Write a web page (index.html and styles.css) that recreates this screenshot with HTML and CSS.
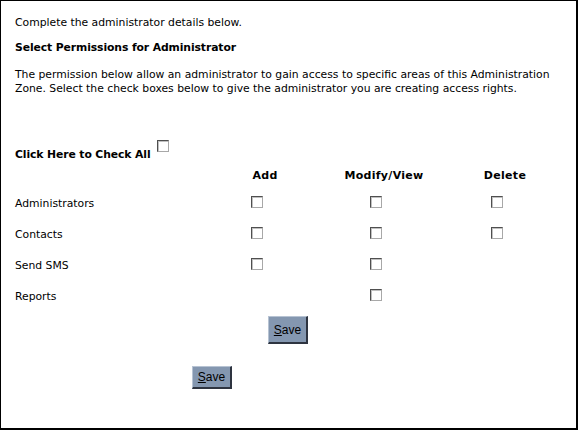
FILE: index.html
```html
<!DOCTYPE html>
<html>
<head>
<meta charset="utf-8">
<link rel="stylesheet" href="styles.css">
</head>
<body>
<div class="frame">
  <p class="intro">Complete the administrator details below.</p>
  <h2 class="title">Select Permissions for Administrator</h2>
  <p class="desc">The permission below allow an administrator to gain access to specific areas of this Administration Zone. Select the check boxes below to give the administrator you are creating access rights.</p>
  <div class="checkall"><span class="checkall-label">Click Here to Check All</span><span class="cb cb-top"></span></div>
  <div class="perm-grid">
    <div class="cell"></div>
    <div class="cell head">Add</div>
    <div class="cell head">Modify/View</div>
    <div class="cell head">Delete</div>

    <div class="cell label">Administrators</div>
    <div class="cell box"><span class="cb"></span></div>
    <div class="cell box"><span class="cb"></span></div>
    <div class="cell box"><span class="cb"></span></div>

    <div class="cell label">Contacts</div>
    <div class="cell box"><span class="cb"></span></div>
    <div class="cell box"><span class="cb"></span></div>
    <div class="cell box"><span class="cb"></span></div>

    <div class="cell label">Send SMS</div>
    <div class="cell box"><span class="cb"></span></div>
    <div class="cell box"><span class="cb"></span></div>
    <div class="cell box"></div>

    <div class="cell label">Reports</div>
    <div class="cell box"></div>
    <div class="cell box"><span class="cb"></span></div>
    <div class="cell box"></div>
  </div>
  <div class="save-row"><button class="btn btn-tall"><u>S</u>ave</button></div>
  <div class="save-row2"><button class="btn btn-short"><u>S</u>ave</button></div>
</div>
</body>
</html>
```
FILE: styles.css
```css
html, body {
  margin: 0;
  padding: 0;
  background: #fff;
}
.frame {
  box-sizing: border-box;
  width: 578px;
  height: 430px;
  border-top: 1px solid #000;
  border-left: 1px solid #000;
  border-right: 2px solid #000;
  border-bottom: 2px solid #000;
  padding: 15px 14px 0 14px;
  font-family: "DejaVu Sans", Verdana, sans-serif;
  font-size: 10.8px;
  line-height: 14px;
  color: #000;
}
.intro {
  margin: 0;
}
.title {
  margin: 11px 0 0 0;
  font-size: 10.8px;
  line-height: 14px;
  font-weight: bold;
  letter-spacing: -0.1px;
}
.desc {
  margin: 13px 0 0 0;
}
.checkall {
  margin-top: 52px;
  height: 14px;
  display: flex;
  align-items: flex-start;
  font-weight: bold;
  letter-spacing: -0.1px;
}
.checkall-label {
  margin-right: 6px;
}
.cb {
  display: inline-block;
  box-sizing: border-box;
  width: 12px;
  height: 12px;
  background: #fff;
  border-top: 1px solid #4f4f4f;
  border-left: 1px solid #4f4f4f;
  border-right: 1px solid #a8a8a8;
  border-bottom: 1px solid #a8a8a8;
  box-shadow: inset 1px 1px 0 #c0c0c0;
}
.cb-top {
  position: relative;
  top: -8px;
}
.perm-grid {
  display: grid;
  grid-template-columns: 200px 100px 138px 104px;
  grid-template-rows: 24px 31px 31px 31px 31px;
  margin-top: 2px;
}
.cell {
  display: flex;
  align-items: center;
}
.head {
  justify-content: center;
  font-weight: bold;
  font-size: 11px;
  letter-spacing: 0.3px;
}
.box {
  justify-content: center;
}
.box .cb {
  margin-right: 16px;
  margin-bottom: 3px;
}
.save-row {
  width: 546px;
  display: flex;
  justify-content: center;
  margin-top: 4px;
}
.save-row2 {
  display: flex;
  margin-top: 22px;
  padding-left: 177px;
}
.btn {
  box-sizing: border-box;
  width: 40px;
  padding: 0;
  background: #8497b0;
  border-top: 1px solid #b7c3d3;
  border-left: 1px solid #b7c3d3;
  border-right: 2px solid #2e3440;
  border-bottom: 2px solid #2e3440;
  font-family: "Liberation Sans", Arial, sans-serif;
  font-size: 12px;
  color: #000;
}
.btn-tall {
  height: 28px;
}
.btn-short {
  height: 23px;
}
```
